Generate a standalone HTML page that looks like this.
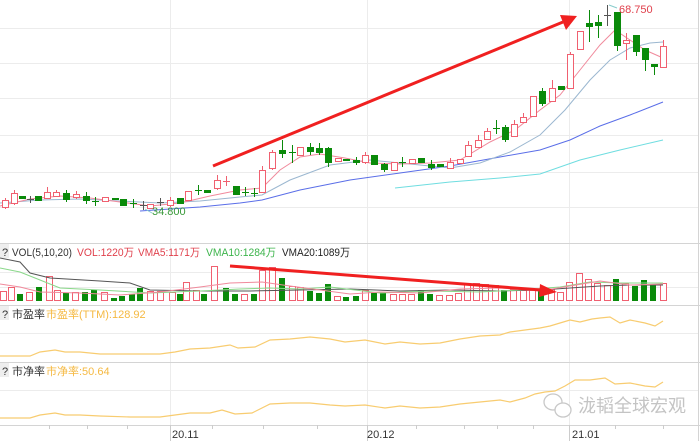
<!DOCTYPE html>
<html><head><meta charset="utf-8"><style>
html,body{margin:0;padding:0;background:#fff;width:700px;height:441px;overflow:hidden}
svg{display:block}
text{font-family:"Liberation Sans","Noto Sans CJK SC",sans-serif}
</style></head><body>
<svg width="700" height="441" viewBox="0 0 700 441" xmlns="http://www.w3.org/2000/svg">
<g stroke="#ececec" stroke-width="1">
<line x1="0" y1="28.5" x2="698" y2="28.5"/><line x1="0" y1="63.5" x2="698" y2="63.5"/>
<line x1="0" y1="98.5" x2="698" y2="98.5"/><line x1="0" y1="135.5" x2="698" y2="135.5"/>
<line x1="0" y1="172.5" x2="698" y2="172.5"/><line x1="0" y1="207.5" x2="698" y2="207.5"/>
<line x1="170.5" y1="0" x2="170.5" y2="425"/><line x1="367.5" y1="0" x2="367.5" y2="425"/><line x1="569.5" y1="0" x2="569.5" y2="425"/>
<line x1="0" y1="272.5" x2="698" y2="272.5"/><line x1="0" y1="287.5" x2="698" y2="287.5"/>
<line x1="0" y1="333.5" x2="698" y2="333.5"/><line x1="0" y1="390.5" x2="698" y2="390.5"/>
</g>
<g stroke="#d4d4d4" stroke-width="1" fill="none">
<line x1="0" y1="243.5" x2="700" y2="243.5"/><line x1="0" y1="305.5" x2="700" y2="305.5"/>
<line x1="0" y1="362.5" x2="700" y2="362.5"/><line x1="0" y1="425.5" x2="700" y2="425.5"/>
<line x1="698.5" y1="0" x2="698.5" y2="441"/>
</g>
<g stroke="#ccc"><line x1="49.5" y1="425" x2="49.5" y2="429"/><line x1="87.5" y1="425" x2="87.5" y2="429"/><line x1="127.5" y1="425" x2="127.5" y2="429"/><line x1="170.5" y1="425" x2="170.5" y2="441"/><line x1="212.5" y1="425" x2="212.5" y2="429"/><line x1="263.5" y1="425" x2="263.5" y2="429"/><line x1="317.5" y1="425" x2="317.5" y2="429"/><line x1="367.5" y1="425" x2="367.5" y2="441"/><line x1="416.5" y1="425" x2="416.5" y2="429"/><line x1="464.5" y1="425" x2="464.5" y2="429"/><line x1="497.5" y1="425" x2="497.5" y2="429"/><line x1="533.5" y1="425" x2="533.5" y2="429"/><line x1="569.5" y1="425" x2="569.5" y2="441"/><line x1="615.5" y1="425" x2="615.5" y2="429"/><line x1="663.5" y1="425" x2="663.5" y2="429"/></g>
<text x="172" y="438" font-size="11" fill="#333">20.11</text>
<text x="367" y="438" font-size="11" fill="#333">20.12</text>
<text x="572" y="438" font-size="11" fill="#333">21.01</text>

<polyline fill="none" stroke="#5a6ee8" stroke-width="1" points="140,211 170,209 200,207 240,203 262,200 300,190 350,180 400,173 450,166 500,157 540,150 570,140 600,126 630,115 663,102"/>
<polyline fill="none" stroke="#6fdde0" stroke-width="1" points="395,188 450,182 500,178 540,174 580,160 620,150 663,140"/>
<polyline fill="none" stroke="#9bb7d0" stroke-width="1" points="0,203 40,200 80,199 120,201 160,203 200,201 240,197 262,195 290,180 330,165 370,160 410,164 450,168 480,163 510,152 540,135 565,110 590,80 610,60 630,48 650,43 663,42"/>
<polyline fill="none" stroke="#f08a9c" stroke-width="1" points="0,206 30,199 60,196 90,198 120,202 150,206 180,203 210,196 240,190 262,188 280,170 300,157 320,154 345,158 370,163 400,164 430,163 460,160 490,142 515,130 540,110 560,95 580,70 600,45 615,30 630,40 645,50 663,58"/>

<g stroke-width="1">
<g stroke="#f06070" fill="#fff">
<line x1="5.5" y1="198" x2="5.5" y2="209"/><rect x="2.5" y="200.5" width="6" height="7"/>
<line x1="14.5" y1="190" x2="14.5" y2="205"/><rect x="11.5" y="193.5" width="6" height="10"/>
<line x1="47.5" y1="187" x2="47.5" y2="199"/><rect x="44.5" y="192.5" width="6" height="6"/>
<line x1="56.5" y1="190" x2="56.5" y2="197"/><rect x="53.5" y="192.5" width="6" height="4"/>
<line x1="76.5" y1="191" x2="76.5" y2="199"/><rect x="73.5" y="194.5" width="6" height="3"/>
<rect x="102.5" y="197.5" width="6" height="4"/>
<rect x="147.5" y="204.5" width="6" height="4"/>
<line x1="170.5" y1="197" x2="170.5" y2="207"/><rect x="167.5" y="200.5" width="6" height="5"/>
<rect x="185.5" y="191.5" width="6" height="9"/>
<line x1="217.5" y1="175" x2="217.5" y2="190"/><rect x="214.5" y="180.5" width="6" height="8"/>
<line x1="226.5" y1="176" x2="226.5" y2="186"/><line x1="223" y1="181.5" x2="230" y2="181.5"/>
<line x1="262.5" y1="166" x2="262.5" y2="192"/><rect x="259.5" y="170.5" width="6" height="22"/>
<line x1="272.5" y1="150" x2="272.5" y2="170"/><rect x="269.5" y="152.5" width="6" height="16"/>
<rect x="297.5" y="147.5" width="6" height="8"/>
<rect x="335.5" y="158.5" width="6" height="3"/>
<line x1="365.5" y1="152" x2="365.5" y2="164"/><rect x="362.5" y="155.5" width="6" height="7"/>
<rect x="391.5" y="162.5" width="6" height="8"/>
<rect x="409.5" y="159.5" width="6" height="4"/>
<line x1="450.5" y1="158" x2="450.5" y2="169"/><rect x="447.5" y="162.5" width="6" height="6"/>
<rect x="457.5" y="159.5" width="6" height="4"/>
<line x1="468.5" y1="141" x2="468.5" y2="157"/><rect x="465.5" y="145.5" width="6" height="11"/>
<line x1="478.5" y1="135" x2="478.5" y2="148"/><rect x="475.5" y="140.5" width="6" height="7"/>
<line x1="487.5" y1="128" x2="487.5" y2="140"/><rect x="484.5" y="131.5" width="6" height="8"/>
<line x1="514.5" y1="120" x2="514.5" y2="137"/><rect x="511.5" y="124.5" width="6" height="12"/>
<line x1="523.5" y1="113" x2="523.5" y2="123"/><rect x="520.5" y="117.5" width="6" height="5"/>
<rect x="530.5" y="96.5" width="6" height="20"/>
<line x1="552.5" y1="80" x2="552.5" y2="102"/><rect x="549.5" y="88.5" width="6" height="13"/>
<line x1="570.5" y1="52" x2="570.5" y2="89"/><rect x="567.5" y="54.5" width="6" height="34"/>
<rect x="577.5" y="31.5" width="6" height="18"/>
<line x1="626.5" y1="33" x2="626.5" y2="60"/><rect x="623.5" y="40.5" width="6" height="3"/>
<line x1="663.5" y1="40" x2="663.5" y2="68"/><rect x="660.5" y="46.5" width="6" height="21"/>
</g>
<g stroke="#0a8a0a" fill="#0a8a0a">
<rect x="19.5" y="196.5" width="6" height="2"/>
<rect x="35.5" y="196.5" width="6" height="4"/>
<line x1="66.5" y1="190" x2="66.5" y2="202"/><rect x="63.5" y="193.5" width="6" height="6"/>
<line x1="86.5" y1="192" x2="86.5" y2="204"/><rect x="83.5" y="196.5" width="6" height="4"/>
<line x1="95.5" y1="197" x2="95.5" y2="206"/><line x1="92" y1="201.5" x2="99" y2="201.5"/>
<rect x="112.5" y="198.5" width="6" height="1"/>
<rect x="120.5" y="199.5" width="6" height="6"/>
<line x1="133.5" y1="199" x2="133.5" y2="208"/><line x1="130" y1="203.5" x2="137" y2="203.5"/>
<rect x="177.5" y="198.5" width="6" height="5"/>
<line x1="198.5" y1="185" x2="198.5" y2="195"/><line x1="195" y1="190.5" x2="202" y2="190.5"/>
<rect x="204.5" y="190.5" width="6" height="2"/>
<rect x="233.5" y="186.5" width="6" height="8"/>
<line x1="245.5" y1="187" x2="245.5" y2="196"/><line x1="242" y1="192.5" x2="249" y2="192.5"/>
<line x1="254.5" y1="188" x2="254.5" y2="197"/><line x1="251" y1="193.5" x2="258" y2="193.5"/>
<line x1="282.5" y1="140" x2="282.5" y2="158"/><rect x="279.5" y="150.5" width="6" height="3"/>
<line x1="292.5" y1="145" x2="292.5" y2="163"/><line x1="289" y1="152.5" x2="296" y2="152.5"/>
<line x1="310.5" y1="143" x2="310.5" y2="155"/><rect x="307.5" y="147.5" width="6" height="4"/>
<line x1="319.5" y1="143" x2="319.5" y2="155"/><rect x="316.5" y="148.5" width="6" height="4"/>
<line x1="328.5" y1="147" x2="328.5" y2="167"/><rect x="325.5" y="148.5" width="6" height="14"/>
<rect x="343.5" y="159.5" width="6" height="1"/>
<line x1="356.5" y1="157" x2="356.5" y2="165"/><rect x="353.5" y="160.5" width="6" height="2"/>
<rect x="371.5" y="155.5" width="6" height="9"/>
<line x1="384.5" y1="163" x2="384.5" y2="172"/><rect x="381.5" y="164.5" width="6" height="5"/>
<line x1="402.5" y1="157" x2="402.5" y2="167"/><line x1="399" y1="162.5" x2="406" y2="162.5"/>
<rect x="418.5" y="158.5" width="6" height="4"/>
<line x1="431.5" y1="160" x2="431.5" y2="170"/><rect x="428.5" y="164.5" width="6" height="3"/>
<rect x="437.5" y="164.5" width="6" height="2"/>
<line x1="496.5" y1="120" x2="496.5" y2="134"/><line x1="493" y1="128.5" x2="500" y2="128.5"/>
<line x1="505.5" y1="125" x2="505.5" y2="142"/><rect x="502.5" y="127.5" width="6" height="12"/>
<line x1="542.5" y1="88" x2="542.5" y2="106"/><rect x="539.5" y="91.5" width="6" height="12"/>
<rect x="558.5" y="86.5" width="6" height="3"/>
<line x1="589.5" y1="10" x2="589.5" y2="42"/><rect x="586.5" y="23.5" width="6" height="3"/>
<line x1="598.5" y1="15" x2="598.5" y2="38"/><rect x="595.5" y="22.5" width="6" height="3"/>
<rect x="614.5" y="12.5" width="6" height="33"/>
<line x1="617.5" y1="45" x2="617.5" y2="51"/>
<line x1="636.5" y1="35" x2="636.5" y2="56"/><rect x="633.5" y="35.5" width="6" height="16"/>
<line x1="645.5" y1="48" x2="645.5" y2="71"/><rect x="642.5" y="48.5" width="6" height="11"/>
<line x1="654.5" y1="64" x2="654.5" y2="75"/><rect x="651.5" y="64.5" width="6" height="2"/>
</g>
<g stroke="#555">
<line x1="30.5" y1="196" x2="30.5" y2="203"/><line x1="27" y1="199.5" x2="34" y2="199.5"/>
<line x1="143.5" y1="201" x2="143.5" y2="210"/><line x1="140" y1="205.5" x2="147" y2="205.5"/>
<line x1="160.5" y1="198" x2="160.5" y2="206"/><line x1="157" y1="202.5" x2="164" y2="202.5"/>
<line x1="607.5" y1="5" x2="607.5" y2="26"/><line x1="604" y1="15.5" x2="611" y2="15.5"/>
</g>
</g>
<line x1="609" y1="5" x2="617" y2="8" stroke="#8cc" stroke-width="1"/>
<text x="619" y="13" font-size="11" fill="#e0404c">68.750</text>
<line x1="145" y1="209" x2="152" y2="213" stroke="#8cc"/>
<text x="152" y="215" font-size="11" fill="#3a9a3a">34.800</text>
<line x1="213" y1="166" x2="563" y2="22" stroke="#f02020" stroke-width="3"/>
<polygon points="577,16 560,15 566,30" fill="#f02020"/>

<rect x="0" y="244" width="9" height="14" fill="#eee"/>
<text x="2" y="256" font-size="11" fill="#333">?</text>
<text x="12" y="256" font-size="11" fill="#333" textLength="60" lengthAdjust="spacingAndGlyphs">VOL(5,10,20)</text>
<text x="77" y="256" font-size="11" fill="#e0404c" textLength="57" lengthAdjust="spacingAndGlyphs">VOL:1220万</text>
<text x="138" y="256" font-size="11" fill="#e0404c" textLength="62" lengthAdjust="spacingAndGlyphs">VMA5:1171万</text>
<text x="206" y="256" font-size="11" fill="#3cb44b" textLength="70" lengthAdjust="spacingAndGlyphs">VMA10:1284万</text>
<text x="282" y="256" font-size="11" fill="#222" textLength="68" lengthAdjust="spacingAndGlyphs">VMA20:1089万</text>
<g stroke="#f06070" fill="#fff">
<rect x="0.5" y="291.5" width="6" height="9"/><rect x="8.5" y="287.5" width="6" height="13"/><rect x="26.5" y="292.5" width="6" height="8"/><rect x="46.5" y="276.5" width="6" height="24"/><rect x="54.5" y="290.5" width="6" height="10"/><rect x="72.5" y="292.5" width="6" height="8"/><rect x="101.5" y="292.5" width="6" height="8"/><rect x="147.5" y="291.5" width="6" height="9"/><rect x="157.5" y="291.5" width="6" height="9"/><rect x="169.5" y="292.5" width="6" height="8"/><rect x="183.5" y="282.5" width="6" height="18"/><rect x="193.5" y="290.5" width="6" height="10"/><rect x="211.5" y="266.5" width="6" height="34"/><rect x="241.5" y="294.5" width="6" height="6"/><rect x="259.5" y="270.5" width="6" height="30"/><rect x="269.5" y="267.5" width="6" height="33"/><rect x="289.5" y="286.5" width="6" height="14"/><rect x="297.5" y="287.5" width="6" height="13"/>
<rect x="334.5" y="296.5" width="6" height="4"/><rect x="362.5" y="290.5" width="6" height="10"/><rect x="390.5" y="294.5" width="6" height="6"/><rect x="399.5" y="294.5" width="6" height="6"/><rect x="408.5" y="294.5" width="6" height="6"/><rect x="436.5" y="295.5" width="6" height="5"/><rect x="446.5" y="295.5" width="6" height="5"/><rect x="455.5" y="293.5" width="6" height="7"/><rect x="464.5" y="283.5" width="6" height="17"/><rect x="473.5" y="283.5" width="6" height="17"/><rect x="482.5" y="284.5" width="6" height="16"/><rect x="492.5" y="285.5" width="6" height="15"/><rect x="510.5" y="289.5" width="6" height="11"/><rect x="520.5" y="290.5" width="6" height="10"/><rect x="529.5" y="290.5" width="6" height="10"/><rect x="548.5" y="289.5" width="6" height="11"/><rect x="557.5" y="292.5" width="6" height="8"/><rect x="566.5" y="282.5" width="6" height="18"/><rect x="576.5" y="273.5" width="6" height="27"/><rect x="585.5" y="279.5" width="6" height="21"/><rect x="594.5" y="283.5" width="6" height="17"/><rect x="604.5" y="285.5" width="6" height="15"/><rect x="622.5" y="283.5" width="6" height="17"/><rect x="660.5" y="283.5" width="6" height="17"/>
</g>
<g fill="#0a8a0a">
<rect x="17" y="294" width="6" height="7"/><rect x="36" y="287" width="6" height="14"/><rect x="63" y="293" width="6" height="8"/><rect x="82" y="292" width="6" height="9"/><rect x="91" y="290" width="6" height="11"/><rect x="111" y="298" width="6" height="3"/><rect x="119" y="296" width="6" height="5"/><rect x="129" y="294" width="6" height="7"/><rect x="137" y="288" width="6" height="13"/><rect x="177" y="294" width="6" height="7"/><rect x="201" y="294" width="6" height="7"/><rect x="223" y="288" width="6" height="13"/><rect x="232" y="294" width="6" height="7"/><rect x="251" y="294" width="6" height="7"/><rect x="279" y="278" width="6" height="23"/><rect x="307" y="291" width="6" height="10"/><rect x="316" y="293" width="6" height="8"/><rect x="325" y="284" width="6" height="17"/><rect x="343" y="297" width="6" height="4"/><rect x="353" y="296" width="6" height="5"/><rect x="371" y="293" width="6" height="8"/><rect x="380" y="293" width="6" height="8"/><rect x="418" y="290" width="6" height="11"/><rect x="427" y="294" width="6" height="7"/><rect x="501" y="290" width="6" height="11"/><rect x="538" y="291" width="6" height="10"/><rect x="613" y="279" width="6" height="22"/><rect x="632" y="286" width="6" height="15"/><rect x="641" y="280" width="6" height="21"/><rect x="650" y="285" width="6" height="16"/>
</g>
<polyline fill="none" stroke="#555" stroke-width="1" points="0,258 20,262 30,273 50,278 100,281 130,283 150,290 200,291 250,291 300,290 350,289 400,291 450,290 500,291 540,290 570,288 600,286 630,285 663,285"/>
<polyline fill="none" stroke="#8ad88a" stroke-width="1" points="0,268 20,272 40,280 60,288 100,290 150,293 200,291 240,289 270,288 300,289 330,287 380,293 430,291 480,292 520,290 560,287 590,282 620,283 663,283"/>
<polyline fill="none" stroke="#f08a9c" stroke-width="1" points="0,284 20,287 40,292 80,293 120,295 160,292 200,287 230,283 262,282 290,286 320,290 350,294 380,292 420,293 460,289 500,288 540,291 570,286 600,281 630,285 663,284"/>
<line x1="230" y1="266" x2="541" y2="290" stroke="#f02020" stroke-width="3"/>
<polygon points="557,292 540,284 539,297" fill="#f02020"/>

<rect x="0" y="306" width="9" height="14" fill="#eee"/>
<text x="2" y="318" font-size="11" fill="#333">?</text>
<text x="12" y="318" font-size="11" fill="#333">市盈率</text>
<text x="46" y="318" font-size="11" fill="#f5b942">市盈率(TTM):128.92</text>
<polyline fill="none" stroke="#f8cc70" stroke-width="1.2" points="0,356 30,356 40,352 55,350 65,352 80,352 100,354 120,354 140,354 160,354 175,352 190,349 210,348 230,345 238,348 255,347 270,340 290,339 310,337 330,339 345,342 365,340 385,344 400,342 420,344 440,343 460,339 480,336 500,335 510,332 525,330 540,328 550,326 560,323 570,320 580,322 592,319 600,318 610,317 620,323 630,320 645,323 655,326 663,321"/>

<rect x="0" y="363" width="9" height="14" fill="#eee"/>
<text x="2" y="375" font-size="11" fill="#333">?</text>
<text x="12" y="375" font-size="11" fill="#333">市净率</text>
<text x="46" y="375" font-size="11" fill="#f5b942">市净率:50.64</text>
<polyline fill="none" stroke="#f8cc70" stroke-width="1.2" points="0,418 30,418 40,415 55,413 65,415 80,415 100,416 130,417 160,417 175,415 190,413 210,413 222,410 235,414 252,413 270,404 290,403 310,403 330,405 345,406 365,405 385,408 400,406 420,408 440,407 460,404 480,402 500,400 510,402 525,398 535,394 545,392 555,391 565,386 575,380 590,380 605,378 615,384 630,383 645,386 655,387 663,382"/>

<g stroke="#c8c8c8" stroke-width="1.3" fill="#fff">
<ellipse cx="553" cy="402" rx="9" ry="8"/>
<ellipse cx="563" cy="410" rx="8" ry="7"/>
</g>
<text x="578" y="412" font-size="18" fill="#c4c4c4">泷韬全球宏观</text>
</svg>
</body></html>
